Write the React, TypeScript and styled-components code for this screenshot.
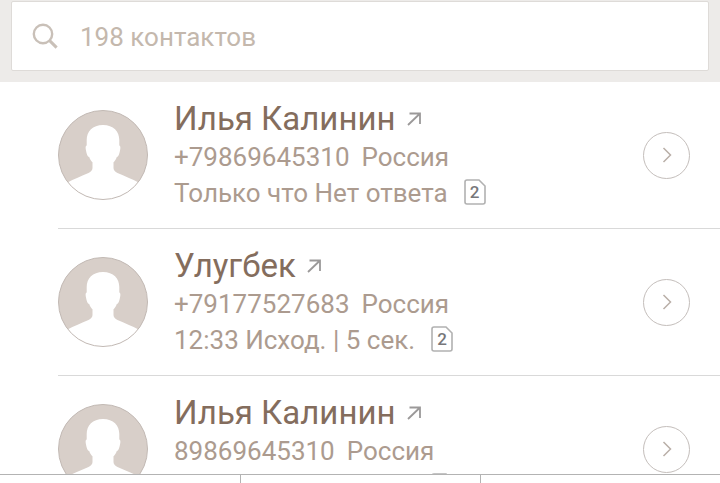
import React from "react";
import styled, { createGlobalStyle } from "styled-components";

const GlobalStyle = createGlobalStyle`
  * { box-sizing: border-box; }
  body { margin: 0; background: #fff; font-family: Roboto, "Noto Sans", sans-serif; }
`;

const Page = styled.div`
  display: flex;
  flex-direction: column;
  height: 100vh;
  overflow: hidden;
`;

const Header = styled.header`
  flex: none;
  padding: 1px 11px 11px;
  background: #edebe9;
`;

const SearchBox = styled.label`
  display: flex;
  align-items: center;
  gap: 22px;
  height: 70px;
  padding: 0 20px;
  background: #fff;
  border: 1px solid #dedbd8;
  border-radius: 2px;
`;

const SearchInput = styled.input`
  flex: 1;
  min-width: 0;
  padding: 2px 0 0;
  border: 0;
  outline: 0;
  background: transparent;
  color: #85705f;
  font: 400 26px/32px Roboto, "Noto Sans", sans-serif;
  &::placeholder { color: #c4b8ad; opacity: 1; }
`;

const List = styled.ul`
  flex: 1;
  min-height: 0;
  margin: 0;
  padding: 0 0 0 58px;
  overflow-y: auto;
  scrollbar-width: none;
  list-style: none;
`;

const Row = styled.li`
  display: flex;
  align-items: center;
  height: 147px;
  padding-right: 30px;
  border-bottom: 1px solid #d9d9d9;
`;

const Details = styled.div`
  flex: 1;
  min-width: 0;
  margin-left: 26px;
`;

const Name = styled.div`
  display: flex;
  align-items: center;
  gap: 10px;
  color: #846d5d;
  font-size: 33px;
  line-height: 40px;
  white-space: nowrap;
`;

const Line = styled.div<{ $gap: number }>`
  display: flex;
  align-items: center;
  gap: ${(p) => p.$gap}px;
  color: #ac9b8f;
  font-size: 26px;
  line-height: 36px;
  white-space: nowrap;
`;

const SimBadge = styled.span`
  position: relative;
  display: flex;
  align-items: center;
  justify-content: center;
  width: 22px;
  height: 26px;
  margin-bottom: 2px;
  color: #77777a;
  font-size: 17px;
  line-height: 26px;
  font-weight: 500;
`;

const SimOutline = styled.svg`
  position: absolute;
  inset: 0;
`;

const MoreButton = styled.button`
  display: flex;
  align-items: center;
  justify-content: center;
  flex: none;
  width: 47px;
  height: 47px;
  padding: 0;
  border: 1px solid #c4bebb;
  border-radius: 50%;
  background: #fff;
`;

const TabBar = styled.nav`
  display: grid;
  grid-template-columns: repeat(3, 1fr);
  flex: none;
  height: 9px;
  border-top: 1px solid #b3b3b3;
  background: #fff;
`;

const Tab = styled.button`
  padding: 0;
  border: 0;
  background: #fff;
  & + & { border-left: 1px solid #b3b3b3; }
`;

const SearchIcon = () => (
  <svg width="26" height="26" viewBox="0 0 26 26" fill="none" stroke="#c9c0b8" strokeWidth="2.4" aria-hidden="true">
    <circle cx="11" cy="11" r="9.2" />
    <path d="M17.6 17.6 L24.6 24.6" strokeWidth="3" />
  </svg>
);

const Avatar = () => (
  <svg width="90" height="90" viewBox="0 0 90 90" aria-hidden="true">
    <circle cx="45" cy="45" r="44.5" fill="#d8cfc9" />
    <path
      fill="#fff"
      d="M45 15C55.5 15 61.3 21.5 61.3 30V35.500C62.800 36 62.500 38.500 61.900 41C61.300 43.500 60.800 46.500 58.800 47C57.900 49.500 57 51 55.500 52.200V58C55.500 60.200 57 61.800 59.500 63C66.500 66.200 74.500 69 80.500 72.500A44.500 44.500 0 0 1 9.500 72.500C15.500 69 23.500 66.200 30.500 63C33 61.800 34.500 60.200 34.500 58V52.200C33 51 32.100 49.500 31.200 47C29.200 46.500 28.700 43.500 28.100 41C27.500 38.500 27.200 36 28.700 35.500V30C28.700 21.500 34.500 15 45 15Z"
    />
    <circle cx="45" cy="45" r="44.500" fill="none" stroke="#c2b9b4" />
  </svg>
);

const OutgoingIcon = () => (
  <svg width="16" height="16" viewBox="0 0 16 16" fill="none" stroke="#9b9999" strokeWidth="1.8" aria-hidden="true">
    <path d="M3.500 2.500H14V13M14 2.500L2 14" />
  </svg>
);

const Sim = ({ slot }: { slot: number }) => (
  <SimBadge>
    <SimOutline width="22" height="26" viewBox="0 0 22 26" fill="none" stroke="#b1b1b1" strokeWidth="1.600" aria-hidden="true">
      <path d="M3 1H15L21 7V23Q21 25 19 25H3Q1 25 1 23V3Q1 1 3 1Z" />
    </SimOutline>
    {slot}
  </SimBadge>
);

const Chevron = () => (
  <svg width="10" height="16" viewBox="0 0 10 16" fill="none" stroke="#b9afa8" strokeWidth="1.500" aria-hidden="true">
    <path d="M1.500 1L8.500 8L1.500 15" />
  </svg>
);

const calls = [
  { name: "Илья Калинин", phone: "+79869645310", status: "Только что Нет ответа", sim: 2 },
  { name: "Улугбек", phone: "+79177527683", status: "12:33 Исход. | 5 сек.", sim: 2 },
  { name: "Илья Калинин", phone: "89869645310", status: "12:30 Исход. | 9 сек.", sim: 2 },
];

const tabs = ["Звонки", "Контакты", "Набор номера"];

export default function App() {
  return (
    <Page>
      <GlobalStyle />
      <Header>
        <SearchBox>
          <SearchIcon />
          <SearchInput type="text" placeholder="198 контактов" aria-label="Поиск контактов" />
        </SearchBox>
      </Header>
      <List>
        {calls.map((call) => (
          <Row key={call.phone}>
            <Avatar />
            <Details>
              <Name>
                <span>{call.name}</span>
                <OutgoingIcon />
              </Name>
              <Line $gap={12}>
                <span>{call.phone}</span>
                <span>Россия</span>
              </Line>
              <Line $gap={16}>
                <span>{call.status}</span>
                <Sim slot={call.sim} />
              </Line>
            </Details>
            <MoreButton type="button" aria-label={call.name}>
              <Chevron />
            </MoreButton>
          </Row>
        ))}
      </List>
      <TabBar>
        {tabs.map((tab) => (
          <Tab key={tab} type="button" aria-label={tab} />
        ))}
      </TabBar>
    </Page>
  );
}
